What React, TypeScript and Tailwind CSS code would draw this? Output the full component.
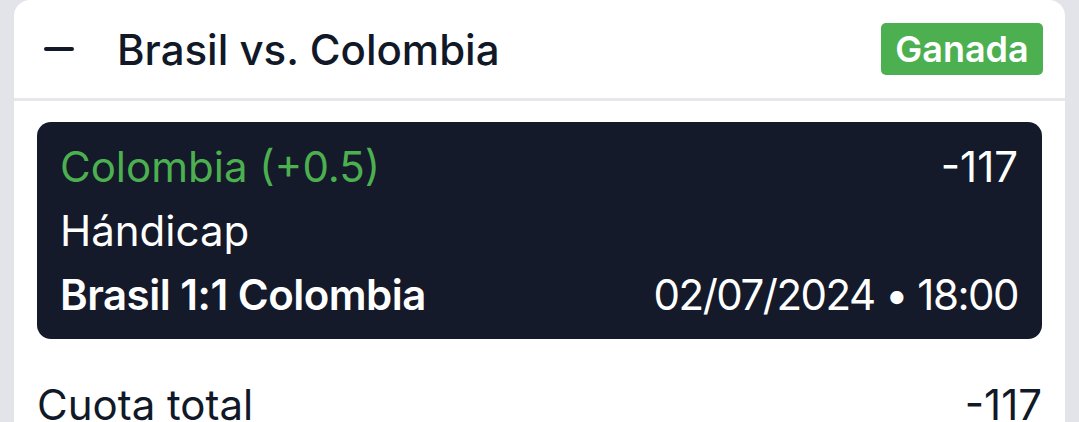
import React from "react";

const font = { fontFamily: "Inter, 'Noto Sans', sans-serif" };

function Badge({ label }: { label: string }) {
  return (
    <div className="flex h-[52px] w-[162px] items-center justify-center rounded-[5px] bg-[#4caf50] text-[36px] font-semibold text-white">
      {label}
    </div>
  );
}

function SelectionCard() {
  return (
    <div className="flex h-[217px] flex-col justify-center rounded-[14px] bg-[#141a29] pl-[23px] pr-[24px] text-[42px] leading-[64px] text-white">
      <div className="flex items-center justify-between">
        <span className="text-[#4caf50]">Colombia (+0.5)</span>
        <span>-117</span>
      </div>
      <div>Hándicap</div>
      <div className="flex items-center justify-between">
        <span className="font-semibold tracking-[-0.5px]">Brasil 1:1 Colombia</span>
        <span className="tracking-[-1.5px]">02/07/2024 • 18:00</span>
      </div>
    </div>
  );
}

export default function App() {
  return (
    <div className="h-[422px] w-full overflow-hidden bg-[#e3e4e9] px-[14px]" style={font}>
      <div className="h-full rounded-t-[16px] bg-white">
        <div className="flex h-[98px] items-center justify-between pl-[30px] pr-[22px]">
          <div className="flex items-center gap-[43px]">
            <div className="h-[4px] w-[30px] rounded-full bg-[#111827]" />
            <h2 className="text-[42px] font-[450] text-[#111827]">Brasil vs. Colombia</h2>
          </div>
          <Badge label="Ganada" />
        </div>
        <div className="h-[3px] bg-[#e5e7eb]" />
        <div className="px-[23px] pt-[21px]">
          <SelectionCard />
          <div className="mt-[34px] flex items-center justify-between text-[42px] leading-[64px] text-[#111827]">
            <span>Cuota total</span>
            <span>-117</span>
          </div>
        </div>
      </div>
    </div>
  );
}
